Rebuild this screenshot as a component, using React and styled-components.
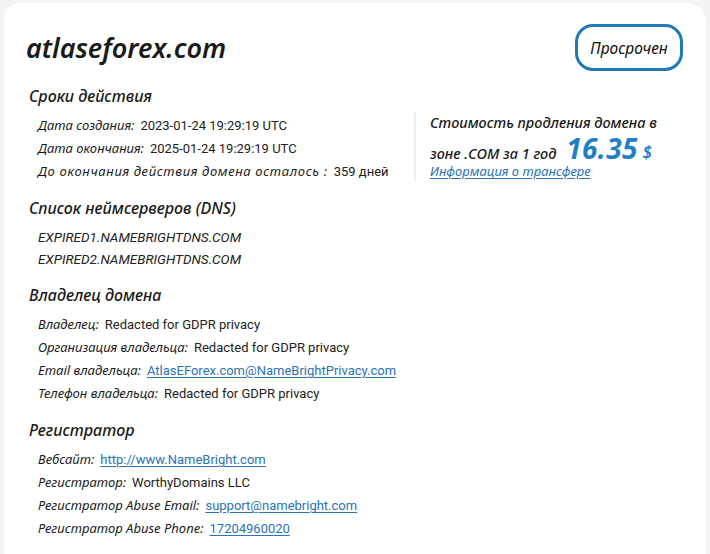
import React from "react";
import styled, { createGlobalStyle } from "styled-components";

const Global = createGlobalStyle`
  html, body { margin: 0; padding: 0; }
  body {
    background: #f3f3f3;
    font-family: "Noto Sans", "Liberation Sans", sans-serif;
    color: #1c1c1c;
  }
`;

const Card = styled.div`
  margin: 3px 4px 0 4px;
  background: #ffffff;
  border-radius: 16px 18px 0 0;
  padding: 21px 23px 20px 22px;
  min-height: 520px;
  box-sizing: border-box;
`;

const Header = styled.header`
  display: flex;
  align-items: center;
  justify-content: space-between;
`;

const Domain = styled.h1`
  margin: 0;
  font-size: 27px;
  line-height: 34px;
  font-style: italic;
  font-weight: 600;
  color: #1a1a1a;
`;

const StatusBadge = styled.div`
  display: flex;
  align-items: center;
  justify-content: center;
  width: 108px;
  height: 47px;
  box-sizing: border-box;
  border: 3px solid #1f79b8;
  border-radius: 18px;
  font-size: 15.5px;
  font-style: italic;
  color: #111;
`;

const Section = styled.section`
  margin-top: 14px;
`;

const SectionTitle = styled.h2`
  margin: 0 0 0 3px;
  font-size: 16px;
  line-height: 22px;
  font-style: italic;
  font-weight: 500;
  color: #1a1a1a;
`;

const SectionBody = styled.div`
  display: flex;
  align-items: flex-start;
  margin-top: 7px;
`;

const Rows = styled.div`
  display: flex;
  flex-direction: column;
  padding-left: 12px;
`;

const Row = styled.div`
  height: ${(p) => (p.$tight ? 22 : 23)}px;
  line-height: ${(p) => (p.$tight ? 22 : 23)}px;
  font-size: 13px;
  white-space: nowrap;
`;

const Label = styled.span`
  font-style: italic;
  line-height: 1;
  color: #1a1a1a;
  margin-right: 6px;
  letter-spacing: ${(p) => (p.$wide ? "0.65px" : "normal")};
`;

const Value = styled.span`
  font-family: "Roboto", "Liberation Sans", sans-serif;
  font-size: ${(p) => (p.$size || 13)}px;
  line-height: 1;
  color: #222;
  font-style: ${(p) => (p.$italic ? "italic" : "normal")};
`;

const Link = styled.a`
  font-family: "Roboto", "Liberation Sans", sans-serif;
  font-size: 13px;
  line-height: 1;
  color: #2b73b3;
  text-decoration: underline;
  text-underline-offset: 2px;
`;

const PriceBox = styled.aside`
  margin-left: auto;
  width: 253px;
  height: 66px;
  box-sizing: content-box;
  border-left: 2px solid #eeeeee;
  padding: 3px 0 0 14px;
  margin-top: -2px;
  display: flex;
  flex-direction: column;
`;

const PriceLine = styled.div`
  display: flex;
  align-items: baseline;
  flex: none;
  height: ${(p) => p.$h}px;
  font-size: 14.5px;
  font-style: italic;
  font-weight: 500;
  line-height: 1;
  color: #1a1a1a;
  white-space: nowrap;
`;

const Price = styled.span`
  font-size: 28px;
  font-weight: 700;
  font-style: italic;
  color: #1f7fc4;
  margin-left: 10px;
  letter-spacing: 0.3px;
`;

const Currency = styled.span`
  font-size: 17px;
  font-weight: 600;
  font-style: italic;
  color: #1f7fc4;
  margin-left: 5px;
`;

const TransferLink = styled.a`
  display: block;
  font-size: 13px;
  font-style: italic;
  line-height: 18px;
  color: #2b73b3;
  text-decoration: underline;
  text-underline-offset: 2px;
`;

export default function App() {
  return (
    <>
      <Global />
      <Card>
        <Header>
          <Domain>atlaseforex.com</Domain>
          <StatusBadge>Просрочен</StatusBadge>
        </Header>

        <Section>
          <SectionTitle>Сроки действия</SectionTitle>
          <SectionBody>
            <Rows>
              <Row>
                <Label>Дата создания:</Label>
                <Value>2023-01-24 19:29:19 UTC</Value>
              </Row>
              <Row>
                <Label>Дата окончания:</Label>
                <Value>2025-01-24 19:29:19 UTC</Value>
              </Row>
              <Row>
                <Label $wide>До окончания действия домена осталось :</Label>
                <Value>359 дней</Value>
              </Row>
            </Rows>
            <PriceBox>
              <PriceLine $h={19}>Стоимость продления домена в</PriceLine>
              <PriceLine $h={28}>
                зоне .COM за 1 год<Price>16.35</Price>
                <Currency>$</Currency>
              </PriceLine>
              <TransferLink href="#">Информация о трансфере</TransferLink>
            </PriceBox>
          </SectionBody>
        </Section>

        <Section>
          <SectionTitle>Список неймсерверов (DNS)</SectionTitle>
          <SectionBody>
            <Rows>
              <Row $tight>
                <Value $italic $size={13.5}>EXPIRED1.NAMEBRIGHTDNS.COM</Value>
              </Row>
              <Row $tight>
                <Value $italic $size={13.5}>EXPIRED2.NAMEBRIGHTDNS.COM</Value>
              </Row>
            </Rows>
          </SectionBody>
        </Section>

        <Section>
          <SectionTitle>Владелец домена</SectionTitle>
          <SectionBody>
            <Rows>
              <Row>
                <Label>Владелец:</Label>
                <Value>Redacted for GDPR privacy</Value>
              </Row>
              <Row>
                <Label>Организация владельца:</Label>
                <Value>Redacted for GDPR privacy</Value>
              </Row>
              <Row>
                <Label>Email владельца:</Label>
                <Link href="#">AtlasEForex.com@NameBrightPrivacy.com</Link>
              </Row>
              <Row>
                <Label>Телефон владельца:</Label>
                <Value>Redacted for GDPR privacy</Value>
              </Row>
            </Rows>
          </SectionBody>
        </Section>

        <Section>
          <SectionTitle>Регистратор</SectionTitle>
          <SectionBody>
            <Rows>
              <Row>
                <Label>Вебсайт:</Label>
                <Link href="#">http://www.NameBright.com</Link>
              </Row>
              <Row>
                <Label>Регистратор:</Label>
                <Value>WorthyDomains LLC</Value>
              </Row>
              <Row>
                <Label>Регистратор Abuse Email:</Label>
                <Link href="#">support@namebright.com</Link>
              </Row>
              <Row>
                <Label>Регистратор Abuse Phone:</Label>
                <Link href="#">17204960020</Link>
              </Row>
            </Rows>
          </SectionBody>
        </Section>
      </Card>
    </>
  );
}
